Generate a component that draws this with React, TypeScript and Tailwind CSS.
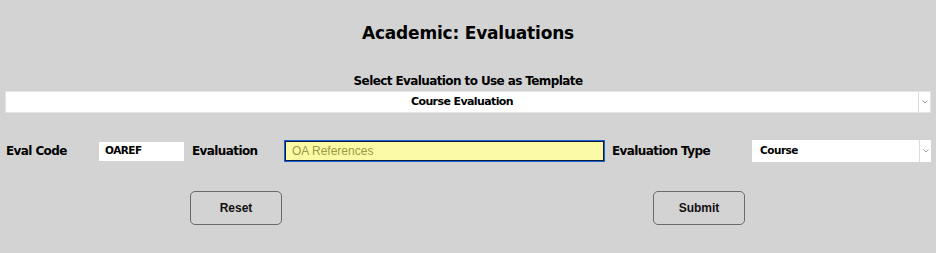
import React from "react";

const gothic = { fontFamily: '"DejaVu Sans", sans-serif' };

function Chevron() {
  return (
    <div className="flex items-center h-full border-l border-[#dcdcdc] w-[12px] justify-center">
      <svg width="6" height="4" viewBox="0 0 6 4">
        <path d="M0.5 0.5 L3 3 L5.5 0.5" stroke="#a0a0a0" strokeWidth="1" fill="none" />
      </svg>
    </div>
  );
}

export default function App() {
  return (
    <div className="w-[936px] h-[253px] bg-[#d3d3d3] text-black flex flex-col" style={gothic}>
      <h1 className="text-center font-bold text-[17px] tracking-[-0.2px] mt-[21px] h-[24px] leading-[24px]">
        Academic: Evaluations
      </h1>
      <div className="text-center font-bold text-[12px] tracking-[-0.6px] mt-[28px] leading-[16px]">
        Select Evaluation to Use as Template
      </div>
      <div className="mx-[5px] mt-[2px] h-[22px] bg-white border border-[#e4e4e4] flex items-center">
        <div className="flex-1 text-center text-[11px] font-bold tracking-[-0.6px]">Course Evaluation</div>
        <Chevron />
      </div>
      <div className="flex items-center mt-[27px] h-[22px]">
        <div className="ml-[6px] w-[93px] font-bold text-[12px] tracking-[-0.6px]">Eval Code</div>
        <div className="w-[85px] h-[19px] bg-white flex items-center pl-[6px] text-[10.5px] font-bold tracking-[-0.5px]">OAREF</div>
        <div className="ml-[8px] w-[92px] font-bold text-[12px] tracking-[-0.6px]">Evaluation</div>
        <div
          className="w-[321px] h-[22px] bg-[#fafaa6] border border-[#1a5fd6] shadow-[inset_0_0_0_1px_#0e1e3a] flex items-center pl-[7px] text-[12px] text-[#9a9a40]"
          style={{ fontFamily: '"Liberation Sans", Arial, sans-serif' }}
        >
          OA References
        </div>
        <div className="ml-[7px] w-[140px] font-bold text-[12px] tracking-[-0.6px]">Evaluation Type</div>
        <div className="w-[179px] h-[22px] bg-white flex items-center">
          <div className="flex-1 pl-[8px] text-[10.5px] font-bold tracking-[-0.5px]">Course</div>
          <Chevron />
        </div>
      </div>
      <div className="flex mt-[29px]">
        <button
          className="ml-[190px] w-[92px] h-[34px] rounded-[5px] border border-[#6a6a6a] bg-[#d3d3d3] text-[12px] font-bold text-[#111]"
          style={{ fontFamily: '"Liberation Sans", Arial, sans-serif' }}
        >
          Reset
        </button>
        <button
          className="ml-[371px] w-[92px] h-[34px] rounded-[5px] border border-[#6a6a6a] bg-[#d3d3d3] text-[12px] font-bold text-[#111]"
          style={{ fontFamily: '"Liberation Sans", Arial, sans-serif' }}
        >
          Submit
        </button>
      </div>
    </div>
  );
}
